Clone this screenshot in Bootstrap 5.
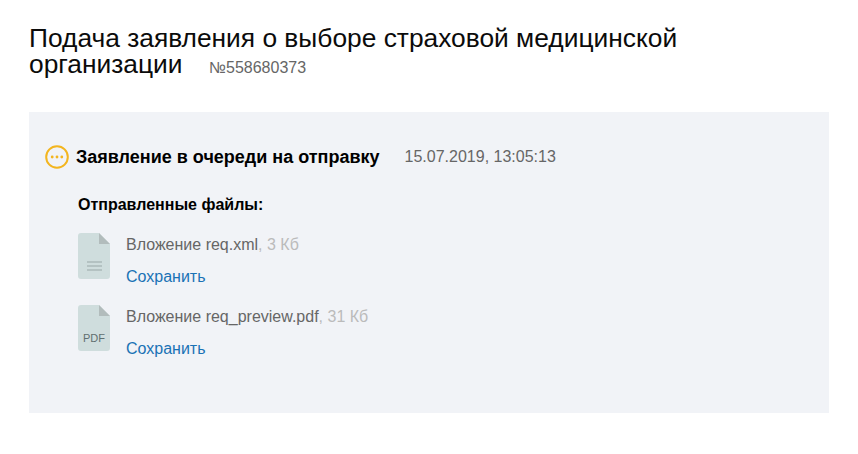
<!DOCTYPE html>
<html lang="ru"><head><meta charset="utf-8">
<link href="https://cdn.jsdelivr.net/npm/bootstrap@5.3.0/dist/css/bootstrap.min.css" rel="stylesheet">
<style>
html,body{background:#fff;overflow:hidden;font-family:"Liberation Sans",Arial,sans-serif;}
.page-wrap{padding:25px 29px 0;}
.head-title{font-size:26.35px;line-height:26px;font-weight:400;color:#0b0b0b;margin:0 0 31px;font-family:"Liberation Sans",sans-serif;width:760px;}
.head-num{font-size:16px;color:#666;margin-left:19px;}
.status-panel{background:#f1f3f7;width:800px;height:301px;padding:33px 16px 0;}
.status-ico{width:24px;height:24px;flex:none;margin-right:7px;}
.status-text{font-size:18px;font-weight:700;color:#000;line-height:24px;}
.status-date{font-size:16px;color:#666;margin-left:25px;line-height:24px;}
.files-block{padding-left:33px;margin-top:26px;}
.files-cap{font-size:16px;font-weight:700;color:#000;line-height:20px;margin-bottom:20px;}
.file-item{margin-bottom:20px;}
.file-ico{width:32px;height:46px;flex:none;margin-right:16px;margin-top:-2px;}
.file-name{font-size:16px;line-height:20px;color:#666;}
.file-size{color:#bbb;}
.file-save{font-size:16px;line-height:20px;color:#1a72b5;text-decoration:none;display:block;margin-top:12px;}
</style></head><body>
<div class="page-wrap">
<h1 class="head-title">Подача заявления о выборе страховой медицинской организации <span class="head-num">№558680373</span></h1>
<div class="status-panel">
<div class="d-flex align-items-center">
<svg class="status-ico" viewBox="0 0 24 24"><circle cx="12" cy="12" r="10.8" fill="none" stroke="#f3b51f" stroke-width="2"/><circle cx="7.2" cy="12" r="1.4" fill="#f3b51f"/><circle cx="12" cy="12" r="1.4" fill="#f3b51f"/><circle cx="16.8" cy="12" r="1.4" fill="#f3b51f"/></svg>
<span class="status-text">Заявление в очереди на отправку</span>
<span class="status-date">15.07.2019, 13:05:13</span>
</div>
<div class="files-block">
<div class="files-cap">Отправленные файлы:</div>
<div class="file-item d-flex">
<svg class="file-ico" viewBox="0 0 32 46"><path d="M3 0H21L32 11V43a3 3 0 0 1-3 3H3a3 3 0 0 1-3-3V3a3 3 0 0 1 3-3Z" fill="#cfdddd"/><path d="M21 0L32 11H21Z" fill="#b2bcbc"/><path d="M9 29H24M9 33H24M9 37H24" stroke="#9aa8a8" stroke-width="1.2"/></svg>
<div><div class="file-name">Вложение req.xml<span class="file-size">, 3 Кб</span></div><a class="file-save" href="#">Сохранить</a></div>
</div>
<div class="file-item d-flex">
<svg class="file-ico" viewBox="0 0 32 46"><path d="M3 0H21L32 11V43a3 3 0 0 1-3 3H3a3 3 0 0 1-3-3V3a3 3 0 0 1 3-3Z" fill="#cfdddd"/><path d="M21 0L32 11H21Z" fill="#b2bcbc"/><text x="16" y="37" font-size="11" font-family="Liberation Sans" fill="#5f6f70" text-anchor="middle">PDF</text></svg>
<div><div class="file-name">Вложение req_preview.pdf<span class="file-size">, 31 Кб</span></div><a class="file-save" href="#">Сохранить</a></div>
</div>
</div>
</div>
</div>
</body></html>
